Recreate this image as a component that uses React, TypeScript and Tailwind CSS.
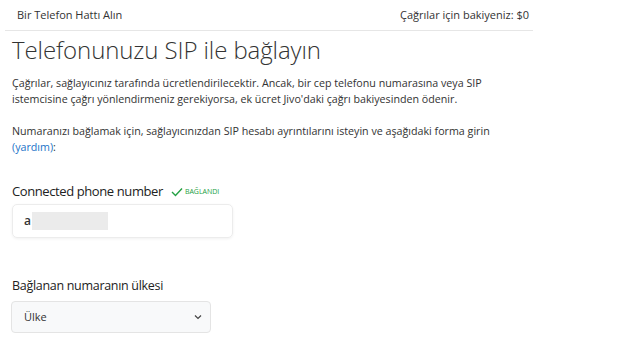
import React from 'react';

const font = { fontFamily: '"Open Sans", "Noto Sans", sans-serif' };

export default function App() {
  return (
    <div className="w-[621px] h-[344px] bg-white overflow-hidden text-[#222]" style={font}>
      <div className="w-[528px] ml-[5px] flex justify-between items-center h-[31px] border-b border-[#e6e6e6] pl-[12px] pr-[4px] text-[11px] text-[#333]">
        <span>Bir Telefon Hattı Alın</span>
        <span>Çağrılar için bakiyeniz: $0</span>
      </div>

      <div className="pl-[12px]">
        <h1 className="text-[24px] font-light leading-[30px] mt-[4px] text-[#333] tracking-[-0.1px]">Telefonunuzu SIP ile bağlayın</h1>

        <p className="text-[10.7px] leading-[16px] mt-[10px] text-[#333] w-[480px]">
          Çağrılar, sağlayıcınız tarafında ücretlendirilecektir. Ancak, bir cep telefonu numarasına veya SIP istemcisine çağrı yönlendirmeniz gerekiyorsa, ek ücret Jivo'daki çağrı bakiyesinden ödenir.
        </p>
        <p className="text-[10.7px] leading-[16px] mt-[16px] text-[#333] w-[480px]">
          Numaranızı bağlamak için, sağlayıcınızdan SIP hesabı ayrıntılarını isteyin ve aşağıdaki forma girin <span className="text-[#1a73c8]">(yardım)</span>:
        </p>

        <div className="flex items-end mt-[27px] gap-[8px]">
          <span className="text-[13px] leading-[18px] text-[#222] tracking-[-0.4px]">Connected phone number</span>
          <span className="flex items-center gap-[2px] text-[7px] text-[#22a043] uppercase mb-[3px]">
            <svg width="12" height="10" viewBox="0 0 12 10" fill="none">
              <path d="M1 5 L4.5 8.5 L11 1.5" stroke="#22a043" strokeWidth="1.4" />
            </svg>
            BAĞLANDI
          </span>
        </div>

        <div className="w-[221px] h-[34px] mt-[4px] rounded-[5px] border border-[#ececec] shadow-[0_1px_3px_rgba(0,0,0,0.06)] flex items-center pl-[11px]">
          <span className="text-[12px] font-semibold text-[#333]">a</span>
          <span className="w-[76px] h-[18px] bg-[#ebebeb] ml-[1px]"></span>
        </div>

        <div className="mt-[39px] text-[12.5px] leading-[18px] text-[#222] tracking-[-0.3px]">Bağlanan numaranın ülkesi</div>

        <div className="w-[200px] h-[32px] mt-[6px] -ml-[1px] rounded-[4px] border border-[#e4e4e4] bg-[#f8f9fa] flex items-center justify-between pl-[12px] pr-[8px]">
          <span className="text-[11px] text-[#333]">Ülke</span>
          <svg width="8" height="6" viewBox="0 0 8 6" fill="none">
            <path d="M1 1.5 L4 4.5 L7 1.5" stroke="#444" strokeWidth="1.2" />
          </svg>
        </div>
      </div>
    </div>
  );
}
